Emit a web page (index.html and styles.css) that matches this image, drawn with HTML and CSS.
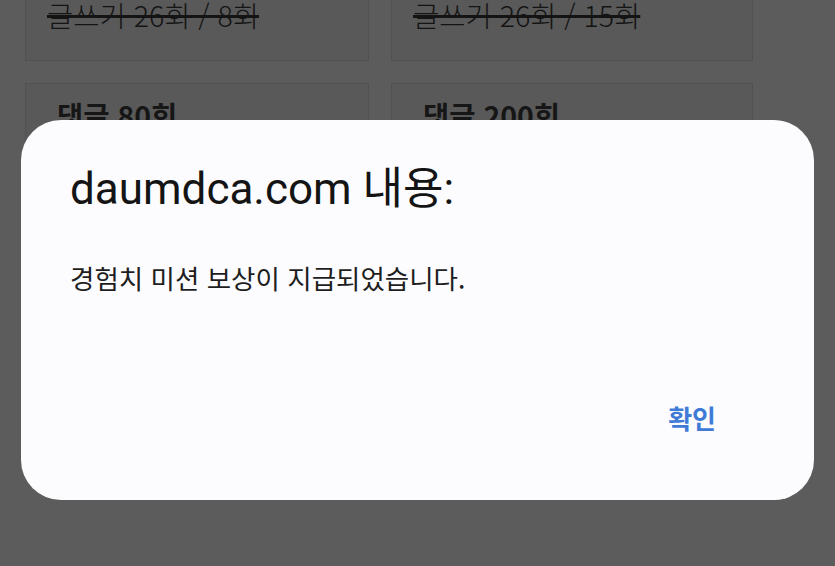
FILE: index.html
```html
<!DOCTYPE html>
<html lang="ko">
<head>
    <meta charset="UTF-8">
    <meta name="viewport" content="width=device-width, initial-scale=1.0">
    <title>미션</title>
    <link rel="stylesheet" href="styles.css">
</head>
<body>
    <div class="missions">
        <div class="mission">
            <p class="mission-done">글쓰기 26회 / 8회</p>
        </div>
        <div class="mission">
            <p class="mission-done">글쓰기 26회 / 15회</p>
        </div>
        <div class="mission">
            <h3 class="mission-title">댓글 80회</h3>
        </div>
        <div class="mission">
            <h3 class="mission-title">댓글 200회</h3>
        </div>
    </div>

    <div class="alert">
        <h2 class="alert-title">daumdca.com 내용:</h2>
        <p class="alert-message">경험치 미션 보상이 지급되었습니다.</p>
        <div class="alert-actions">
            <button class="alert-ok">확인</button>
        </div>
    </div>
</body>
</html>
```

FILE: styles.css
```css
body {
    margin: 0;
    background-color: #5c5c5c;
    font-family: "Noto Sans CJK KR", "Noto Sans", sans-serif;
    overflow: hidden;
    height: 100vh;
}
.missions {
    display: grid;
    grid-template-columns: 344px 362px;
    column-gap: 22px;
    row-gap: 22px;
    padding: 0 25px;
    margin-top: -59px;
}
.mission {
    background-color: #595959;
    border: 1px solid #525252;
    height: 120px;
    box-sizing: border-box;
}
.mission-done {
    margin: 56px 0 0 21px;
    font-size: 28.5px;
    line-height: 34px;
    font-weight: 300;
    color: #141414;
    text-decoration: line-through;
    text-decoration-thickness: 3px;
}
.mission-title {
    margin: 14px 0 0 31px;
    font-size: 28.5px;
    line-height: 34px;
    font-weight: 700;
    color: #161616;
}
.alert {
    position: fixed;
    left: 21px;
    top: 120px;
    width: 793px;
    height: 380px;
    box-sizing: border-box;
    padding: 41px 98px 0 49px;
    background-color: #fcfcfe;
    border-radius: 40px;
    display: flex;
    flex-direction: column;
}
.alert-title {
    margin: 0;
    font-family: Roboto, "Noto Sans CJK KR", sans-serif;
    font-size: 44px;
    line-height: 56px;
    font-weight: 400;
    color: #141414;
}
.alert-message {
    margin: 43px 0 0;
    font-size: 26.5px;
    line-height: 36px;
    color: #1e1e1e;
}
.alert-actions {
    margin-top: auto;
    margin-bottom: 64px;
    display: flex;
    justify-content: flex-end;
}
.alert-ok {
    padding: 0;
    background: transparent;
    border: none;
    font-family: "Noto Sans CJK KR", sans-serif;
    font-size: 26px;
    line-height: 36px;
    font-weight: 700;
    color: #3f7bd6;
}
```
